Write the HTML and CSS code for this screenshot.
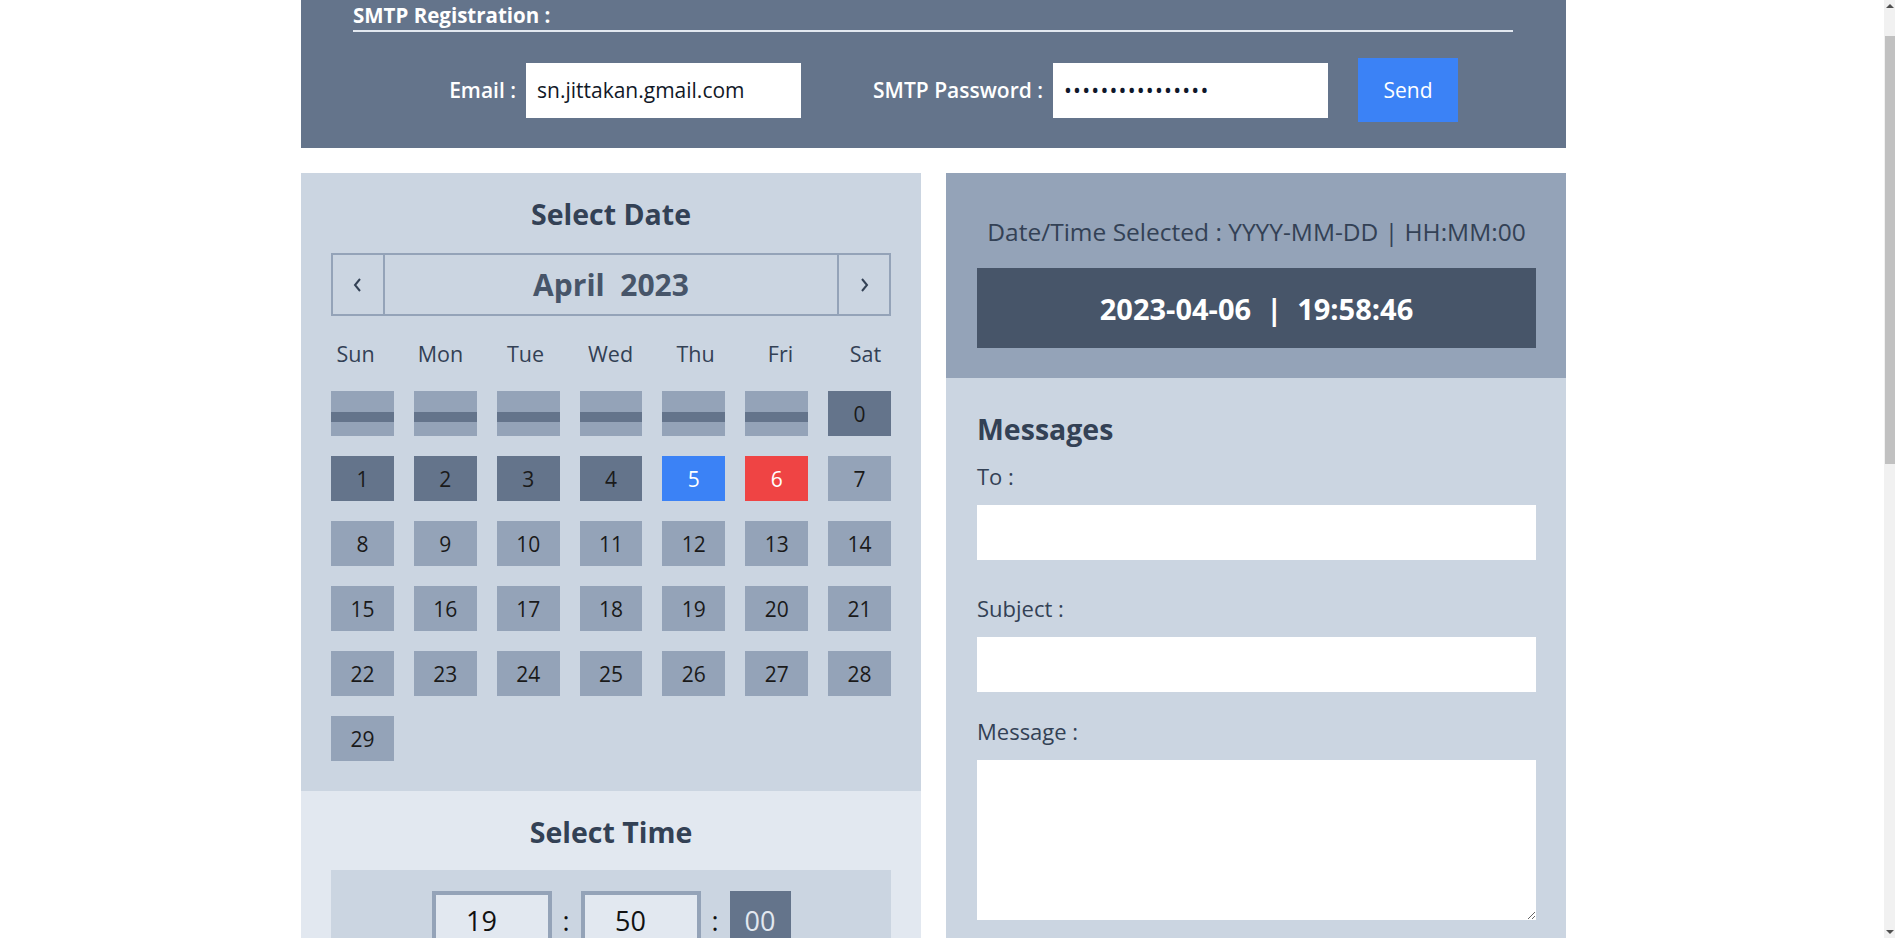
FILE: index.html
```html
<!DOCTYPE html>
<html lang="en">
<head>
<meta charset="utf-8">
<title>SMTP Scheduler</title>
<link rel="stylesheet" href="styles.css">
</head>
<body>
<div class="page">
  <header class="smtp">
    <div class="smtp-title">SMTP Registration :</div>
    <div class="smtp-row">
      <label class="lbl lbl-email">Email :</label>
      <input class="smtp-input" type="text" value="sn.jittakan.gmail.com">
      <label class="lbl lbl-pass">SMTP Password :</label>
      <input class="smtp-input pass" type="password" value="aaaaaaaaaaaaaaaa">
      <button class="send">Send</button>
    </div>
  </header>

  <main class="cols">
    <section class="left">
      <div class="calendar">
        <h2 class="heading">Select Date</h2>
        <div class="month-nav">
          <button class="nav-btn prev"><svg width="12" height="16" viewBox="0 0 12 16"><polyline points="8,2 3,8 8,14" fill="none" stroke="#334155" stroke-width="2"/></svg></button>
          <div class="month">April&nbsp;&nbsp;2023</div>
          <button class="nav-btn next"><svg width="12" height="16" viewBox="0 0 12 16"><polyline points="4,2 9,8 4,14" fill="none" stroke="#334155" stroke-width="2"/></svg></button>
        </div>
        <div class="weekdays">
          <span>Sun</span><span>Mon</span><span>Tue</span><span>Wed</span><span>Thu</span><span>Fri</span><span>Sat</span>
        </div>
        <div class="days">
          <div class="day empty"><i></i></div>
          <div class="day empty"><i></i></div>
          <div class="day empty"><i></i></div>
          <div class="day empty"><i></i></div>
          <div class="day empty"><i></i></div>
          <div class="day empty"><i></i></div>
          <div class="day past">0</div>
          <div class="day past">1</div>
          <div class="day past">2</div>
          <div class="day past">3</div>
          <div class="day past">4</div>
          <div class="day today">5</div>
          <div class="day picked">6</div>
          <div class="day">7</div>
          <div class="day">8</div>
          <div class="day">9</div>
          <div class="day">10</div>
          <div class="day">11</div>
          <div class="day">12</div>
          <div class="day">13</div>
          <div class="day">14</div>
          <div class="day">15</div>
          <div class="day">16</div>
          <div class="day">17</div>
          <div class="day">18</div>
          <div class="day">19</div>
          <div class="day">20</div>
          <div class="day">21</div>
          <div class="day">22</div>
          <div class="day">23</div>
          <div class="day">24</div>
          <div class="day">25</div>
          <div class="day">26</div>
          <div class="day">27</div>
          <div class="day">28</div>
          <div class="day">29</div>
        </div>
      </div>
      <div class="time">
        <h2 class="heading">Select Time</h2>
        <div class="time-box">
          <input class="t-input" type="text" value="19">
          <span class="colon">:</span>
          <input class="t-input" type="text" value="50">
          <span class="colon">:</span>
          <span class="t-sec">00</span>
        </div>
      </div>
    </section>

    <section class="right">
      <div class="sel-panel">
        <div class="sel-caption">Date/Time Selected : YYYY-MM-DD | HH:MM:00</div>
        <div class="sel-value">2023-04-06&nbsp;&nbsp;|&nbsp;&nbsp;19:58:46</div>
      </div>
      <div class="messages">
        <h2 class="msg-heading">Messages</h2>
        <label class="f-label f-to">To :</label>
        <input class="f-input" type="text">
        <label class="f-label f-subject">Subject :</label>
        <input class="f-input" type="text">
        <label class="f-label f-message">Message :</label>
        <textarea class="f-area"></textarea>
      </div>
    </section>
  </main>
</div>

<div class="scrollbar">
  <span class="sb-up"></span>
  <span class="sb-thumb"></span>
  <span class="sb-down"></span>
</div>
</body>
</html>
```

FILE: styles.css
```css
* { box-sizing: border-box; }

html, body {
  margin: 0;
  padding: 0;
  overflow: hidden;
  background: #ffffff;
  font-family: "Open Sans", "Noto Sans", sans-serif;
  color: #334155;
}

.page {
  width: 1265px;
  margin-left: 301px;
}

/* ---------- SMTP header ---------- */
.smtp {
  background: #64748b;
  padding: 0 53px 26px 52px;
  height: 148px;
}

.smtp-title {
  color: #ffffff;
  font-weight: 700;
  font-size: 20.5px;
  line-height: 30px;
  border-bottom: 2px solid #e2e8f0;
}

.smtp-row {
  display: flex;
  align-items: center;
  margin-top: 26px;
  margin-left: -52px;
}

.lbl {
  color: #ffffff;
  font-weight: 600;
  font-size: 21px;
  text-align: right;
  padding-right: 10px;
}

.lbl-email { width: 225px; }
.lbl-pass { width: 252px; }

.smtp-input {
  width: 275px;
  height: 55px;
  border: 0;
  outline: 0;
  background: #ffffff;
  padding: 0 11px;
  font-family: "Open Sans", "Noto Sans", sans-serif;
  font-size: 21px;
  color: #111827;
}

.smtp-input.pass {
  font-size: 21px;
  letter-spacing: 1.2px;
  color: #0f172a;
}

.send {
  margin-left: 30px;
  width: 100px;
  height: 64px;
  border: 0;
  background: #3b82f6;
  color: #ffffff;
  font-family: "Open Sans", "Noto Sans", sans-serif;
  font-size: 21px;
}

/* ---------- columns ---------- */
.cols {
  display: grid;
  grid-template-columns: 620px 620px;
  column-gap: 25px;
  margin-top: 25px;
}

.heading {
  margin: 0;
  text-align: center;
  font-size: 28.5px;
  font-weight: 700;
  line-height: 40px;
  color: #334155;
}

/* ---------- calendar ---------- */
.calendar {
  background: #cbd5e1;
  padding: 21px 30px 30px 30px;
}

.month-nav {
  margin-top: 19px;
  display: flex;
  height: 63px;
  border: 2px solid #94a3b8;
}

.nav-btn {
  width: 52px;
  border: 0;
  background: transparent;
  display: flex;
  align-items: center;
  justify-content: center;
  padding: 0;
}

.nav-btn.prev { border-right: 2px solid #94a3b8; }
.nav-btn.next { border-left: 2px solid #94a3b8; }

.month {
  flex: 1;
  display: flex;
  align-items: center;
  justify-content: center;
  font-size: 30px;
  font-weight: 700;
  color: #475569;
}

.weekdays {
  margin: 24px 0 0 -18px;
  display: grid;
  grid-template-columns: repeat(7, 85px);
  font-size: 21.5px;
  line-height: 28px;
  text-align: center;
  color: #334155;
}

.days {
  margin-top: 23px;
  display: grid;
  grid-template-columns: repeat(7, 1fr);
  grid-auto-rows: 45px;
  gap: 20px;
}

.day {
  background: #94a3b8;
  display: flex;
  align-items: center;
  justify-content: center;
  font-size: 21px;
  color: #1a1a1a;
}

.day.past { background: #64748b; }
.day.today { background: #3b82f6; color: #ffffff; }
.day.picked { background: #ef4444; color: #ffffff; }

.day.empty {
  display: block;
  padding-top: 21px;
}

.day.empty i {
  display: block;
  height: 10px;
  background: #64748b;
}

/* ---------- time ---------- */
.time {
  background: #e2e8f0;
  padding: 21px 30px 30px 30px;
}

.time-box {
  margin-top: 18px;
  background: #cbd5e1;
  padding: 21px 0;
  display: flex;
  justify-content: center;
  align-items: center;
}

.t-input {
  width: 120px;
  height: 58px;
  border: 4px solid #94a3b8;
  background: #e2e8f0;
  text-align: center;
  padding: 0 20px 0 0;
  font-family: "Open Sans", "Noto Sans", sans-serif;
  font-size: 27px;
  color: #111111;
  outline: 0;
}

.colon {
  width: 29px;
  text-align: center;
  font-size: 27px;
  color: #111111;
}

.t-sec {
  width: 61px;
  height: 58px;
  background: #64748b;
  color: #e2e8f0;
  font-size: 27px;
  display: flex;
  align-items: center;
  justify-content: center;
}

/* ---------- right column ---------- */
.sel-panel {
  background: #94a3b8;
  padding: 43px 30px 30px 31px;
}

.sel-caption {
  text-align: center;
  font-size: 24.5px;
  line-height: 32px;
  color: #334155;
}

.sel-value {
  margin-top: 20px;
  height: 80px;
  background: #475569;
  color: #ffffff;
  font-size: 29px;
  font-weight: 700;
  display: flex;
  align-items: center;
  justify-content: center;
}

.messages {
  background: #cbd5e1;
  padding: 31px 30px 40px 31px;
  display: flex;
  flex-direction: column;
}

.msg-heading {
  margin: 0;
  font-size: 28.5px;
  font-weight: 700;
  line-height: 40px;
  color: #334155;
}

.f-label {
  font-size: 22px;
  line-height: 28px;
  color: #334155;
}

.f-to { margin-top: 13px; }
.f-subject { margin-top: 34px; }
.f-message { margin-top: 25px; }

.f-input {
  margin-top: 15px;
  height: 55px;
  border: 0;
  background: #ffffff;
  outline: 0;
}

.f-area {
  margin-top: 15px;
  height: 160px;
  border: 0;
  background: #ffffff;
  resize: vertical;
  outline: 0;
}

/* ---------- fake scrollbar (overlay) ---------- */
.scrollbar {
  position: fixed;
  top: 0;
  right: 0;
  width: 11px;
  height: 100%;
  background: #f1f1f1;
}

.sb-thumb {
  position: absolute;
  left: 1px;
  right: 0;
  top: 36px;
  height: 428px;
  background: #c1c1c1;
}

.sb-up, .sb-down {
  position: absolute;
  left: 2px;
  width: 0;
  height: 0;
  border-left: 4px solid transparent;
  border-right: 4px solid transparent;
}

.sb-up {
  top: 4px;
  border-bottom: 4px solid #505050;
}

.sb-down {
  bottom: 4px;
  border-top: 4px solid #505050;
}
```
